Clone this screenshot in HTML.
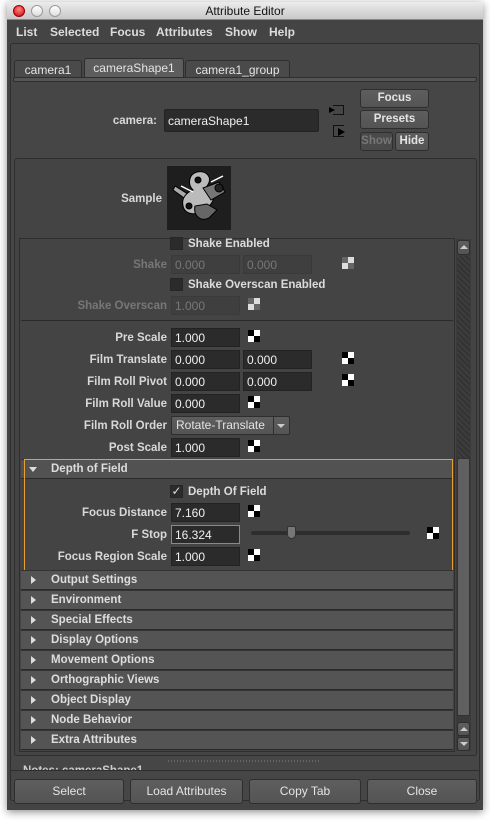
<!DOCTYPE html>
<html><head><meta charset="utf-8"><style>
*{box-sizing:border-box;margin:0;padding:0}
body{width:490px;height:821px;background:#fff;position:relative;overflow:hidden;font-family:"Liberation Sans",sans-serif;font-size:11.5px;color:#dcdcdc}
.a{position:absolute}
.win{left:7px;top:2px;width:476px;height:808px;background:#444;box-shadow:0 2px 8px rgba(0,0,0,.45)}
.title{left:7px;top:2px;width:476px;height:18px;background:linear-gradient(#ececec,#c8c8c8);border-bottom:1px solid #888;text-align:center;color:#111;font-size:12px;line-height:18px}
.dot{width:12px;height:12px;border-radius:50%;top:5px;border:1px solid #999;background:linear-gradient(#fff,#ddd)}
.lbl{text-align:right;font-weight:bold;color:#d8d8d8;white-space:nowrap;margin-top:1px}
.fld{background:#2b2b2b;border:1px solid #232323;height:19px;line-height:19px;padding-left:3px;color:#f0f0f0;font-size:12px}
.dis{color:#777;background:#3f3f3f;border-color:#3a3a3a}
.chk{width:12px;height:12px;background:#fff;}
.chk::before{content:"";position:absolute;left:0;top:0;width:6px;height:6px;background:#000}
.chk::after{content:"";position:absolute;left:6px;top:6px;width:6px;height:6px;background:#000}
.chk.g{background:#ddd}.chk.g::before,.chk.g::after{background:#666}
.hdr{left:21px;width:432px;height:20px;background:#545454;border-top:1px solid #333;border-bottom:1px solid #2a2a2a;font-weight:bold;color:#ddd;line-height:19px;padding-left:30px}
.tri{position:absolute;left:10px;top:5px;width:0;height:0;border-top:4px solid transparent;border-bottom:4px solid transparent;border-left:5px solid #ddd}
.btn{background:linear-gradient(#5e5e5e,#545454);border:1px solid #2e2e2e;border-radius:3px;text-align:center;font-weight:bold;color:#e4e4e4}
.cb{width:13px;height:13px;background:#2b2b2b;border:1px solid #262626}
</style></head><body>
<div class="a win"></div>
<div class="a title">Attribute Editor</div>
<div class="a dot" style="left:13px;background:radial-gradient(circle at 50% 35%,#f88,#c00);border-color:#900"></div>
<div class="a dot" style="left:31px"></div>
<div class="a dot" style="left:49px"></div>
<div class="a" style="left:16px;top:25px;font-size:12px;font-weight:bold">List</div>
<div class="a" style="left:50px;top:25px;font-size:12px;font-weight:bold">Selected</div>
<div class="a" style="left:110px;top:25px;font-size:12px;font-weight:bold">Focus</div>
<div class="a" style="left:156px;top:25px;font-size:12px;font-weight:bold">Attributes</div>
<div class="a" style="left:225px;top:25px;font-size:12px;font-weight:bold">Show</div>
<div class="a" style="left:269px;top:25px;font-size:12px;font-weight:bold">Help</div>
<div class="a" style="left:10px;top:43px;width:470px;height:758px;border:1px solid #2e2e2e;border-radius:3px;background:#464646"></div>
<div class="a btn" style="left:14px;top:60px;width:68px;height:18px;border-radius:3px 3px 0 0;line-height:18px;background:#4a4a4a;font-weight:normal;font-size:12px">camera1</div>
<div class="a btn" style="left:84px;top:58px;width:100px;height:20px;border-radius:3px 3px 0 0;line-height:18px;background:#5d5d5d;border-bottom:none;font-weight:normal;font-size:12px">cameraShape1</div>
<div class="a btn" style="left:185px;top:60px;width:105px;height:18px;border-radius:3px 3px 0 0;line-height:18px;background:#4a4a4a;font-weight:normal;font-size:12px">camera1_group</div>
<div class="a" style="left:13px;top:77px;width:464px;height:5px;background:#555;border:1px solid #2e2e2e;border-radius:2px"></div>
<div class="a lbl" style="left:60px;top:114px;width:97px">camera:</div>
<div class="a fld" style="left:164px;top:109px;width:155px;height:23px;line-height:22px;border-radius:2px">cameraShape1</div>
<div class="a" style="left:333px;top:105px;width:11px;height:10px;border:1px solid #111;border-left:none"></div>
<div class="a" style="left:329px;top:107px;border-top:3px solid transparent;border-bottom:3px solid transparent;border-left:6px solid #000"></div>
<div class="a" style="left:333px;top:125px;width:11px;height:12px;border:1px solid #111;border-right:none"></div>
<div class="a" style="left:338px;top:128px;border-top:4px solid transparent;border-bottom:4px solid transparent;border-left:7px solid #000"></div>
<div class="a btn" style="left:360px;top:89px;width:69px;height:19px;line-height:17px">Focus</div>
<div class="a btn" style="left:360px;top:110px;width:69px;height:19px;line-height:17px">Presets</div>
<div class="a btn" style="left:360px;top:132px;width:33px;height:19px;line-height:17px;color:#777;background:#4a4a4a">Show</div>
<div class="a btn" style="left:395px;top:132px;width:34px;height:19px;line-height:17px">Hide</div>
<div class="a" style="left:14px;top:158px;width:463px;height:598px;border:1px solid #2e2e2e;border-radius:3px;background:#444"></div>
<div class="a lbl" style="left:100px;top:192px;width:62px">Sample</div>
<div class="a" style="left:167px;top:166px;width:64px;height:64px;background:#1e1e1e">
<svg width="64" height="64" viewBox="0 0 64 64"><g stroke="#000" stroke-width="1"><path d="M8 20 L24 30 L20 34 L6 24Z" fill="#aaa"/><path d="M30 6 C40 4 46 12 40 20 C48 22 50 34 40 42 C32 50 18 50 16 40 C14 32 20 26 26 24 C20 18 22 8 30 6Z" fill="#bbb"/><path d="M36 22 L52 16 L58 26 L44 34Z" fill="#777"/><path d="M28 40 C26 50 34 56 42 52 L50 44 L40 38Z" fill="#666"/><circle cx="31" cy="14" r="3" fill="#111"/><circle cx="22" cy="40" r="3" fill="#111"/><circle cx="52" cy="22" r="4" fill="#222"/></g><path d="M44 16 L56 10 M14 20 L26 26" stroke="#fff" stroke-width="1.5"/></svg></div>
<div class="a" style="left:19px;top:238px;width:436px;height:514px;background:#444;border:1px solid #2e2e2e"></div>
<div class="a cb" style="left:170px;top:237px"></div><div class="a" style="left:188px;top:238px;font-weight:bold">Shake Enabled</div>
<div class="a lbl" style="left:60px;top:258px;width:107px;color:#777">Shake</div>
<div class="a fld dis" style="left:171px;top:255px;width:69px">0.000</div><div class="a fld dis" style="left:243px;top:255px;width:69px">0.000</div>
<div class="a chk g" style="left:342px;top:257px"></div>
<div class="a cb" style="left:170px;top:278px"></div><div class="a" style="left:188px;top:279px;font-weight:bold">Shake Overscan Enabled</div>
<div class="a lbl" style="left:40px;top:299px;width:127px;color:#777">Shake Overscan</div>
<div class="a fld dis" style="left:171px;top:296px;width:69px">1.000</div>
<div class="a chk g" style="left:248px;top:298px"></div>
<div class="a" style="left:21px;top:320px;width:432px;height:1px;background:#2a2a2a"></div>
<div class="a lbl" style="left:40px;top:331px;width:127px">Pre Scale</div><div class="a fld" style="left:171px;top:328px;width:69px">1.000</div><div class="a chk" style="left:248px;top:330px"></div>
<div class="a lbl" style="left:40px;top:353px;width:127px">Film Translate</div><div class="a fld" style="left:171px;top:350px;width:69px">0.000</div><div class="a fld" style="left:243px;top:350px;width:69px">0.000</div><div class="a chk" style="left:342px;top:352px"></div>
<div class="a lbl" style="left:40px;top:375px;width:127px">Film Roll Pivot</div><div class="a fld" style="left:171px;top:372px;width:69px">0.000</div><div class="a fld" style="left:243px;top:372px;width:69px">0.000</div><div class="a chk" style="left:342px;top:374px"></div>
<div class="a lbl" style="left:40px;top:397px;width:127px">Film Roll Value</div><div class="a fld" style="left:171px;top:394px;width:69px">0.000</div><div class="a chk" style="left:248px;top:396px"></div>
<div class="a lbl" style="left:40px;top:419px;width:127px">Film Roll Order</div>
<div class="a btn" style="left:171px;top:416px;width:119px;height:19px;line-height:17px;text-align:left;padding-left:4px;border-radius:2px;font-weight:normal;font-size:12px">Rotate-Translate</div>
<div class="a" style="left:273px;top:417px;width:1px;height:17px;background:#2e2e2e"></div>
<div class="a" style="left:277px;top:424px;border-left:4px solid transparent;border-right:4px solid transparent;border-top:4px solid #ccc"></div>
<div class="a lbl" style="left:40px;top:441px;width:127px">Post Scale</div><div class="a fld" style="left:171px;top:438px;width:69px">1.000</div><div class="a chk" style="left:248px;top:440px"></div>
<div class="a hdr" style="top:459px;background:#525252">Depth of Field<span style="position:absolute;left:8px;top:7px;border-left:4px solid transparent;border-right:4px solid transparent;border-top:5px solid #ddd"></span></div>
<div class="a" style="left:24px;top:459px;width:429px;height:112px;border:1px solid #e8a030"></div>
<div class="a cb" style="left:170px;top:485px;color:#ddd;font-size:12px;line-height:11px;text-align:center">✓</div><div class="a" style="left:188px;top:486px;font-weight:bold">Depth Of Field</div>
<div class="a lbl" style="left:40px;top:506px;width:127px">Focus Distance</div><div class="a fld" style="left:171px;top:503px;width:69px">7.160</div><div class="a chk" style="left:248px;top:505px"></div>
<div class="a lbl" style="left:40px;top:528px;width:127px">F Stop</div><div class="a fld" style="left:171px;top:525px;width:69px;border-color:#6a8fb8">16.324</div>
<div class="a" style="left:251px;top:531px;width:159px;height:4px;background:#2e2e2e;border-radius:2px"></div>
<div class="a" style="left:287px;top:526px;width:9px;height:13px;background:#777;border:1px solid #333;border-radius:2px 2px 5px 5px"></div>
<div class="a chk" style="left:427px;top:527px"></div>
<div class="a lbl" style="left:40px;top:550px;width:127px">Focus Region Scale</div><div class="a fld" style="left:171px;top:547px;width:69px">1.000</div><div class="a chk" style="left:248px;top:549px"></div>
<div class="a hdr" style="top:570px"><span class="tri"></span>Output Settings</div>
<div class="a hdr" style="top:590px"><span class="tri"></span>Environment</div>
<div class="a hdr" style="top:610px"><span class="tri"></span>Special Effects</div>
<div class="a hdr" style="top:630px"><span class="tri"></span>Display Options</div>
<div class="a hdr" style="top:650px"><span class="tri"></span>Movement Options</div>
<div class="a hdr" style="top:670px"><span class="tri"></span>Orthographic Views</div>
<div class="a hdr" style="top:690px"><span class="tri"></span>Object Display</div>
<div class="a hdr" style="top:710px"><span class="tri"></span>Node Behavior</div>
<div class="a hdr" style="top:730px"><span class="tri"></span>Extra Attributes</div>
<div class="a" style="left:456px;top:239px;width:15px;height:512px;background:#3a3a3a"></div>
<div class="a" style="left:457px;top:256px;width:13px;height:202px;background:repeating-linear-gradient(45deg,#333 0 2px,#3d3d3d 2px 4px)"></div>
<div class="a" style="left:457px;top:458px;width:13px;height:258px;background:#606060;border:1px solid #333;border-radius:2px"></div>
<div class="a btn" style="left:457px;top:240px;width:13px;height:15px"></div>
<div class="a" style="left:460px;top:245px;border-left:4px solid transparent;border-right:4px solid transparent;border-bottom:4px solid #ccc"></div>
<div class="a btn" style="left:457px;top:722px;width:13px;height:14px"></div>
<div class="a" style="left:460px;top:727px;border-left:4px solid transparent;border-right:4px solid transparent;border-bottom:4px solid #ccc"></div>
<div class="a btn" style="left:457px;top:737px;width:13px;height:14px"></div>
<div class="a" style="left:460px;top:742px;border-left:4px solid transparent;border-right:4px solid transparent;border-top:4px solid #ccc"></div>
<div class="a" style="left:168px;top:760px;width:152px;height:2px;background:repeating-linear-gradient(90deg,#666 0 1px,transparent 1px 3px)"></div>
<div class="a" style="left:23px;top:764px;height:6px;overflow:hidden;width:200px;font-weight:bold;color:#ccc;line-height:14px">Notes: cameraShape1</div>
<div class="a" style="left:10px;top:770px;width:470px;height:1px;background:#2e2e2e"></div>
<div class="a btn" style="left:14px;top:779px;width:110px;height:25px;line-height:23px;font-weight:normal;font-size:12px">Select</div>
<div class="a btn" style="left:130px;top:779px;width:113px;height:25px;line-height:23px;font-weight:normal;font-size:12px">Load Attributes</div>
<div class="a btn" style="left:249px;top:779px;width:112px;height:25px;line-height:23px;font-weight:normal;font-size:12px">Copy Tab</div>
<div class="a btn" style="left:367px;top:779px;width:110px;height:25px;line-height:23px;font-weight:normal;font-size:12px">Close</div>
</body></html>
